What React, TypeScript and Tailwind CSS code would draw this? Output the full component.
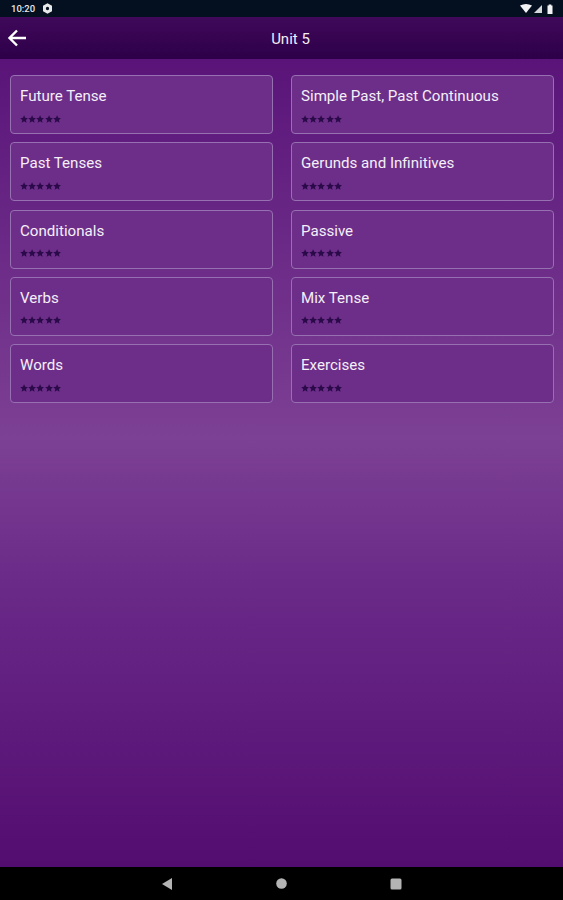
const items = [
  "Future Tense",
  "Simple Past, Past Continuous",
  "Past Tenses",
  "Gerunds and Infinitives",
  "Conditionals",
  "Passive",
  "Verbs",
  "Mix Tense",
  "Words",
  "Exercises",
];

function Star() {
  return (
    <svg width="8.200" height="8.200" viewBox="0 0 24 24" className="fill-[#2b0a4a]">
      <path d="M12 1l3.300 7.400 8 .8-6 5.400 1.700 7.900L12 18.400 5 22.500l1.700-7.900-6-5.400 8-.8z" />
    </svg>
  );
}

export default function App() {
  return (
    <div className="flex h-[900px] w-[563px] flex-col overflow-hidden font-['Roboto',sans-serif]">
      <div className="flex h-[17px] shrink-0 items-center justify-between bg-[#04101f] pl-[11px] pr-[10px]">
        <div className="flex items-center gap-[7px]">
          <span className="text-[9.500px] font-medium leading-none text-[#e6e8ea]">10:20</span>
          <svg width="11" height="11" viewBox="0 0 10 10" className="fill-[#e6e8ea]">
            <path fillRule="evenodd" d="M5 .3l4.100 2.300v4.800L5 9.700.9 7.400V2.600zM5 3.500a1.500 1.500 0 100 3 1.500 1.500 0 000-3z" />
          </svg>
        </div>
        <div className="flex items-center gap-[2px]">
          <svg width="12" height="9" viewBox="0 0 12 9" className="fill-[#f2f3f4]">
            <path d="M0 1.500Q6-1.500 12 1.500L6 9z" />
          </svg>
          <svg width="8" height="8" viewBox="0 0 9 9" className="fill-[#d5d8da]">
            <path d="M9 0v9H0z" />
          </svg>
          <svg width="6" height="10" viewBox="0 0 6 10" className="ml-[3px] fill-[#f2f3f4]">
            <path d="M.5 1.500h1.200V.5h2.600v1h1.200V10H.5z" />
          </svg>
        </div>
      </div>

      <div className="relative flex h-[42px] shrink-0 items-center justify-center bg-gradient-to-b from-[#40095a] to-[#2d0049] pl-[18px] pt-[2px]">
        <svg width="20" height="20" viewBox="0 0 20 20" fill="none" className="absolute left-[7px] top-[11px] stroke-white" strokeWidth="2.400">
          <path d="M19 10H3M10 2.500L2.500 10l7.500 7.500" />
        </svg>
        <span className="text-[15px] leading-none text-[#f3eef6] [font-weight:450]">Unit 5</span>
      </div>

      <div className="grid flex-1 grid-cols-2 content-start gap-x-[18px] gap-y-[8.300px] bg-[linear-gradient(180deg,#5a1479_0%,#7c4094_47%,#6a2a88_65%,#530c70_100%)] pb-0 pl-[10px] pr-[9px] pt-[16px]">
        {items.map((t) => (
          <div
            key={t}
            className="flex h-[59px] flex-col rounded-[4px] border border-[#9670b0] bg-[#6c2e88] pl-[9px] pt-[12px]"
          >
            <span className="text-[15.100px] leading-[17px] text-[#f5eff8]">{t}</span>
            <div className="mt-[9.500px] flex">
              <Star />
              <Star />
              <Star />
              <Star />
              <Star />
            </div>
          </div>
        ))}
      </div>

      <div className="flex h-[33px] shrink-0 items-center bg-black">
        <div className="flex w-full items-center justify-center gap-[103px]">
          <svg width="12" height="12" viewBox="0 0 12 12" className="fill-[#b4b4b4]">
            <path d="M11 0v12L1 6z" />
          </svg>
          <svg width="11" height="11" viewBox="0 0 11 11" className="fill-[#b4b4b4]">
            <circle cx="5.500" cy="5.500" r="5.300" />
          </svg>
          <svg width="12" height="12" viewBox="0 0 12 12" className="fill-[#b4b4b4]">
            <rect x="0.500" y="0.500" width="11" height="11" rx="1.500" />
          </svg>
        </div>
      </div>
    </div>
  );
}
